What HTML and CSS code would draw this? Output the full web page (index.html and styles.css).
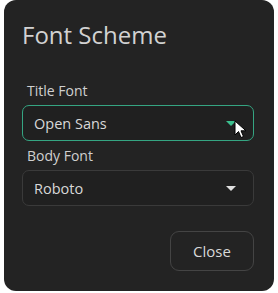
FILE: index.html
```html
<!DOCTYPE html>
<html>
<head>
  <meta charset="utf-8">
  <title>Font Scheme</title>
  <link rel="stylesheet" href="styles.css">
</head>
<body>
  <div class="dialog">
    <h2 class="dialog-title">Font Scheme</h2>

    <label class="field-label">Title Font</label>
    <div class="select active">
      <span class="select-value">Open Sans</span>
      <span class="caret"></span>
      <svg class="cursor" width="14" height="20" viewBox="0 0 14 20">
        <path d="M1 1 L1 15 L4.5 11.5 L7 17.5 L9.5 16.5 L7 10.8 L12 10.8 Z" fill="#fff" stroke="#000" stroke-width="1"/>
      </svg>
    </div>

    <label class="field-label">Body Font</label>
    <div class="select">
      <span class="select-value">Roboto</span>
      <span class="caret"></span>
    </div>

    <div class="actions">
      <button class="btn">Close</button>
    </div>
  </div>
</body>
</html>
```

FILE: styles.css
```css
body {
  margin: 0;
  background-color: #fff;
  font-family: "Open Sans", "Noto Sans", sans-serif;
}

/* Ventana de dialogo */
.dialog {
  box-sizing: border-box;
  width: 270px;
  height: 291px;
  margin: 0 4px;
  padding: 19px 20px 0 18px;
  background-color: #232323;
  border-radius: 12px;
  display: flex;
  flex-direction: column;
}

.dialog-title {
  margin: 0 0 30px 0;
  font-size: 24px;
  line-height: 32px;
  font-weight: 400;
  color: #d2d2d2;
}

.field-label {
  display: block;
  padding-left: 5px;
  margin-bottom: 4px;
  font-size: 14px;
  line-height: 20px;
  color: #d0d0d0;
}

.select {
  position: relative;
  box-sizing: border-box;
  height: 36px;
  margin-bottom: 5px;
  padding: 0 17px 0 11px;
  display: flex;
  align-items: center;
  justify-content: space-between;
  border: 1px solid #3a3a3a;
  border-radius: 7px;
  background-color: #202020;
}

.select.active {
  border-color: #35a582;
}

.select-value {
  font-size: 14.5px;
  color: #d8d8d8;
}

.caret {
  width: 0;
  height: 0;
  border-left: 5px solid transparent;
  border-right: 5px solid transparent;
  border-top: 5px solid #e0e0e0;
}

.select.active .caret {
  border-top-color: #3cc08f;
}

.cursor {
  position: absolute;
  left: 211px;
  top: 14px;
}

.actions {
  display: flex;
  justify-content: flex-end;
  margin-top: 20px;
}

.btn {
  width: 84px;
  height: 40px;
  font-family: inherit;
  font-size: 15px;
  color: #d8d8d8;
  background-color: #232323;
  border: 1px solid #444;
  border-radius: 9px;
  cursor: pointer;
}
```
